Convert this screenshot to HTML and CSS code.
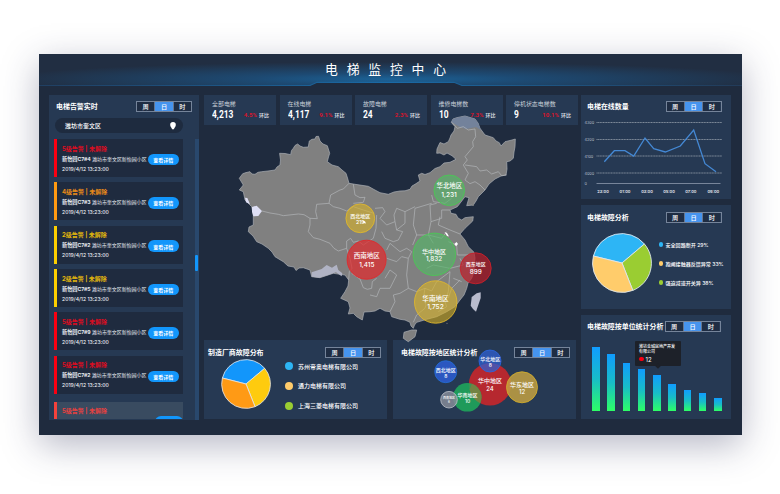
FILE: index.html
```html
<!DOCTYPE html>
<html lang="zh-CN">
<head>
<meta charset="utf-8">
<title>电梯监控中心</title>
<link rel="stylesheet" href="styles.css">
</head>
<body>
<main class="dashboard">
  <header class="header">
    <svg class="header-line" viewBox="39 54 703 34"><path class="header-fill" d="M39 54H742V85.5H462L454 82.3H317L310 85.5H39Z"/><path d="M39 85.5H310L317 82.3H454L462 85.5H742" fill="none" stroke="url(#edge)" stroke-width="1.2"/>
      <defs>
        <linearGradient id="edge"><stop offset="0" stop-color="#203f62"/><stop offset=".5" stop-color="#1a6aa5"/><stop offset="1" stop-color="#223b59"/></linearGradient>
        <radialGradient id="glow" cx=".5" cy=".8" r=".55"><stop offset="0" stop-color="#1b6297"/><stop offset=".35" stop-color="#1d4a73"/><stop offset="1" stop-color="#212e42"/></radialGradient>
      </defs>
    </svg>
    <h1>电梯监控中心</h1>
  </header>

  <div class="columns">
    <section class="panel alerts">
      <div class="head"><h2>电梯告警实时</h2><div class="tabs"><span>周</span><span class="on">日</span><span>时</span></div></div>
      <div class="search"><span>潍坊市奎文区</span><svg viewBox="0 0 6 8"><path d="M3 0a2.8 2.8 0 0 1 2.8 2.9C5.8 4.600 4.200 5.500 3.900 7.300H2.100C1.800 5.500 .2 4.600 .2 2.900A2.800 2.800 0 0 1 3 0Z" fill="#fff"/></svg></div>
      <div class="scroller">
        <div class="list">
          <article class="alert l5"><h3>5级告警 | 未解除</h3><p><b>新怡园C7#4</b> 潍坊市奎文区新怡园小区</p><time>2019/4/12 13:23:00</time><button>查看详情</button></article>
          <article class="alert l4"><h3>4级告警 | 未解除</h3><p><b>新怡园C7#3</b> 潍坊市奎文区新怡园小区</p><time>2019/4/12 13:23:00</time><button>查看详情</button></article>
          <article class="alert l2"><h3>2级告警 | 未解除</h3><p><b>新怡园C7#2</b> 潍坊市奎文区新怡园小区</p><time>2019/4/12 13:23:00</time><button>查看详情</button></article>
          <article class="alert l2"><h3>2级告警 | 未解除</h3><p><b>新怡园C7#5</b> 潍坊市奎文区新怡园小区</p><time>2019/4/12 13:23:00</time><button>查看详情</button></article>
          <article class="alert l5"><h3>5级告警 | 未解除</h3><p><b>新怡园C7#9</b> 潍坊市奎文区新怡园小区</p><time>2019/4/12 13:23:00</time><button>查看详情</button></article>
          <article class="alert l5"><h3>5级告警 | 未解除</h3><p><b>新怡园C7#2</b> 潍坊市奎文区新怡园小区</p><time>2019/4/12 13:23:00</time><button>查看详情</button></article>
          <article class="alert l5 entering"><h3>5级告警 | 未解除</h3><button></button></article>
        </div>
        <div class="track"><i></i></div>
      </div>
    </section>

    <div class="center">
      <div class="stats">
        <div class="stat"><h4>全部电梯</h4><div><strong>4,213</strong><em>4.5%</em><small>环比</small></div></div>
        <div class="stat"><h4>在线电梯</h4><div><strong>4,117</strong><em>9.1%</em><small>环比</small></div></div>
        <div class="stat"><h4>故障电梯</h4><div><strong>24</strong><em>2.3%</em><small>环比</small></div></div>
        <div class="stat"><h4>维修电梯数</h4><div><strong>10</strong><em>7.3%</em><small>环比</small></div></div>
        <div class="stat"><h4>停机状态电梯数</h4><div><strong>9</strong><em>10.1%</em><small>环比</small></div></div>
      </div>
      <svg class="map" viewBox="204 125 374 215">
        <g fill="#808080" stroke="#a9adb3" stroke-width=".7" stroke-linejoin="round">
          <path d="M239.300 178.300L242.700 173.700 246 172.600 250 171.700 252 174 255 174.300 258 172.300 261.700 171.700 268 171 275 170 277 167 280 165 280.500 160 279.600 153.300 285 153.500 290.700 154.700 291.500 150.500 293.300 148.300 295 145.500 297.700 144 300 146 303.300 147.300 308.300 147 309.300 141 312 139.300 315 139 316 136.500 318.500 136.300 320 141 323 144 327.300 145.700 329.700 153.300 328.500 157 327.300 161.700 332 165 338.300 166.700 342 170 346 173.300 347.500 178 349 183.300 355 184.300 368.300 186.300 374 189.500 380 192.700 388.300 194.300 394 192 400 191 405 190.800 410 189.300 412 186 415 184.300 420 181 418.300 175 421.700 173.300 425 174.500 430 172.700 435 168.500 440 166.700 444 163 450 162.300 456 159.300 452 155.700 447 153 444 155 440 153 436.700 153.300 437 149 440 142.500 444 144 448.300 141.700 450 138 451 135 454 131 455 126.700 451.300 122.300 453 119 456.700 117.700 465 116 475 119 478 123 480 128.300 485 135 493.300 137.700 496 141 499.300 142.700 501 146 505 141.700 512 140 515.300 139 515 146.700 514 152 513.300 158.300 510 161 506.700 161.700 507 169 506 175 501 176 495 179 489 184 485 190 478.300 196.700 476 201 473.300 205 466.700 205.700 469 197.700 465 196.700 461 202 457.300 206.700 450 210 451 213.300 456 214.300 458 218 461.700 220 465 217.700 473.300 216.700 472.700 221 465 228.300 460 234 465 240 468.300 246.700 474 252.300 475 258 474.300 265 474 272 471.700 278.300 468 283 466.700 288.300 464 295 460 300 455 306.700 446.700 311.700 436.700 316.700 426.700 319.300 416.700 322.300 414.500 325 413.300 328.300 411 326 410 322.300 405 320 400 319.300 391.700 316.700 390 311.700 385 311 380 308.300 375 311 370 311.700 364 312 362.300 320 356.700 316.700 353.300 313.300 348.300 314 350 308 348.300 301.700 340.700 298.300 345 291.700 348 286 348.700 280 345 275 333.300 273.300 320 277.700 311.700 276.700 310 270 303.300 267.700 299 268 296 270.500 294 267 288 266 283.300 261.700 275 256.700 272 252 268.300 248.300 262 244 256.700 241.700 253 236 248.300 231.700 249 227 253.300 225 253.300 215 251.700 206.700 245 200 243.300 191.700 239.300 190 243.300 185Z"/>
          <path d="M416.700 330L415 336.700 408.300 341.700 403.300 338.300 404 332.300 411.700 330Z"/>
        </g>
        <path fill="#73829b" d="M451.300 122.300L453 119 456.700 117.700 465 116 475 119 478 123 481 130 476 127 466 129 460 127Z"/>
        <g transform="translate(230 115) scale(.3333)">
          <path fill="#dedff5" d="M45 248L52 249 60 268 48 262ZM66 276L80 272 96 288 85 303 70 304 66 290Z"/>
          <path fill="#b0b3c4" d="M245 485L245 472 275 462 290 450 306 458 320 449 325 465 337 475 335 484 318 472 295 480 268 488Z"/>
          <g class="borders">
            <path d="M96 288L120 294 145 298 160 302 205 297 222 299 240 310 262 311 257 290 260 268 297 265L302 240 330 225 340 222 357 205M370 208L375 240 390 248 405 247 400 262 370 265M297 265L310 275 330 280 350 288 370 275 400 285 432 295M240 310L240 330 235 350 250 368 270 373 300 385 312 400 325 408 350 400 350 378 362 370 370 382 385 378 400 390M356 495L358 470 366 460 360 430 350 400M365 475L390 492 400 518 412 523 425 520 427 500 440 490M440 300L438 340 430 370 415 380 400 390"/>
          </g>
        </g>
        <g class="borders" transform="translate(370 115) scale(.3333)">
          <path d="M246 22L262 40 280 35 295 45 315 42 317 65 308 80 310 95 285 125 292 135 280 150 295 175 285 195 300 206 315 200 330 210 345 225M285 150L320 155 330 168 350 165 365 177 385 170 395 182 410 180M185 240L190 260 225 265 245 250M200 265L180 270 183 320 175 360M185 265L135 280 130 330 140 360 128 390M15 280L38 278 45 290 30 310 50 330 75 320 72 300 80 280 105 290 135 275M75 320L80 345 98 350 85 375 70 380 45 370 35 350M105 290L105 325 80 345M183 320L215 310 215 285 240 285M210 305L205 330 240 345 270 357M50 430L80 440 95 425 115 430 125 410 110 400 90 410 60 385 50 405M115 430L110 480 115 520 90 535 70 540 75 560 60 590M115 520L140 530 165 520 185 528 200 500 240 470M165 520L160 550 168 570 165 580 140 600 130 622M240 470L235 530 225 560 230 575 205 590M270 430L280 450 240 460 190 450 170 460M235 380L260 390 262 420 300 420M250 490L275 500M175 360L215 370 230 350M140 360L175 360 190 385M0 540L20 545 30 520 60 520 80 480 60 465 45 490M270 495L245 520 235 550"/>
        </g>
        <g fill="#fff"><path d="M444.500 232L447 233 449 236.500 447 236ZM454.300 244L456.500 242 458 244 456 246.300Z"/></g>
        <path fill="#b9bccd" d="M480.700 292.300L480.700 298 476 311.700 473 309 470.700 305.700 471.700 297 476.700 293.300Z"/>
        <g fill="#808080"><circle cx="447" cy="323.300" r=".6"/><circle cx="473" cy="205" r="1"/></g>
        <g class="bubbles">
          <circle class="green" cx="449.300" cy="190.300" r="15.300"/>
          <circle class="green" cx="434.300" cy="254.300" r="21.200"/>
          <circle class="gold" cx="435.700" cy="302" r="21.200"/>
          <circle class="crimson" cx="475.700" cy="268.300" r="15.500"/>
          <circle class="gold" cx="360.300" cy="218.300" r="14.400"/>
          <circle class="red" cx="366.600" cy="259.700" r="19.500"/>
        </g>
        <path fill="#fff" d="M362.500 221L365 221.300 366 223.500 363.500 223Z"/>
        <g class="labels">
          <text x="449.300" y="186.300" font-size="6.400">华北地区</text><text x="449" y="195" font-size="6.600">1,231</text>
          <text x="434" y="251.200" font-size="6">华中地区</text><text x="434" y="258.700" font-size="6.300">1,832</text>
          <text x="435.500" y="298.700" font-size="6.600">华南地区</text><text x="435.500" y="306.500" font-size="6.600">1,752</text>
          <text x="475.800" y="264.200" font-size="5">西东地区</text><text x="475.800" y="271.700" font-size="6.400">899</text>
          <text x="360.300" y="215.500" font-size="5">西北地区</text><text x="360.300" y="221.800" font-size="5.200">219</text>
          <text x="366.800" y="255.600" font-size="6.500">西南地区</text><text x="366.800" y="264.500" font-size="6.400">1,415</text>
        </g>
      </svg>
      <div class="bottom">
        <section class="panel">
          <div class="head"><h2>制造厂商故障分布</h2><div class="tabs"><span>周</span><span class="on">日</span><span>时</span></div></div>
          <div class="maker">
            <svg class="pie-small" viewBox="-25 -25 50 50"><g stroke="#e6e9ee" stroke-width=".8"><path fill="#1296fb" d="M0 0L-23.600 -6A24.400 24.400 0 0 1 18.700 -15.700Z"/><path fill="#fecb0e" d="M0 0L18.700 -15.700A24.400 24.400 0 0 1 9 22.700Z"/><path fill="#ff9a15" d="M0 0L9 22.700A24.400 24.400 0 0 1 -23.600 -6Z"/></g></svg>
            <ul><li class="c-blue">苏州帝奥电梯有限公司</li><li class="c-orange">通力电梯有限公司</li><li class="c-green">上海三菱电梯有限公司</li></ul>
          </div>
        </section>
        <section class="panel region">
          <div class="head"><h2>电梯故障按地区统计分析</h2><div class="tabs"><span>周</span><span class="on">日</span><span>时</span></div></div>
          <svg class="region-chart" viewBox="393 340 183 79">
            <circle cx="490" cy="384.300" r="21.200" fill="#b6282f"/>
            <circle cx="490" cy="361" r="11" fill="#2f5fd0" fill-opacity=".75" stroke="#2b66e0" stroke-width=".8"/>
            <circle cx="445.700" cy="371.700" r="11" fill="#2b57c0" stroke="#226fd8" stroke-width=".8"/>
            <circle cx="467.300" cy="397.300" r="14.300" fill="#1eaf5c" fill-opacity=".83"/>
            <path d="M469.500 389.500A21.200 21.200 0 0 0 480 403.200 14.300 14.300 0 0 0 472 383.800Z" fill="#8b7a3c" opacity=".7"/>
            <circle cx="522" cy="387.300" r="15.500" fill="#c6a341" fill-opacity=".83" stroke="#ceaa2b" stroke-width=".9"/>
            <circle cx="449" cy="399.700" r="8.300" fill="#858b98" fill-opacity=".85" stroke="#bec3cb" stroke-width=".8"/>
            <g class="labels">
              <text x="490" y="380.900" font-size="6">华中地区</text><text x="490" y="388" font-size="6">24</text>
              <text x="490.300" y="359.200" font-size="5">华北地区</text><text x="490.300" y="365.200" font-size="5">8</text>
              <text x="445.800" y="369.900" font-size="5">西北地区</text><text x="445.800" y="375.700" font-size="5">8</text>
              <text x="467.600" y="394.700" font-size="5">华南地区</text><text x="467.600" y="400.700" font-size="5">10</text>
              <text x="522" y="384.200" font-size="6">华东地区</text><text x="522" y="391.700" font-size="6">12</text>
              <text x="449" y="398" font-size="3">西南地区</text><text x="449" y="401.600" font-size="3">6</text>
            </g>
          </svg>
        </section>
      </div>
    </div>

    <div class="right">
      <section class="panel">
        <div class="head"><h2>电梯在线数量</h2><div class="tabs"><span>周</span><span class="on">日</span><span>时</span></div></div>
        <svg class="line-chart" viewBox="581 118 150 81">
          <path d="M596.500 122.500H722M596.500 139.500H722M596.500 156H722M596.500 173H722" stroke="#7d8998" stroke-width="1" stroke-dasharray="1.200 .4"/>
          <path d="M596.500 183.500H720.500" stroke="#77859a" stroke-width="1"/>
          <path d="M604.300 161.700L614.300 150.700H625L633.700 156 645 138 653.700 148.700 665.300 152 680.300 146 693.700 130 705 163.700 716 171.700" fill="none" stroke="#4488d4" stroke-width="1.300"/>
          <g class="ylab"><text x="584.500" y="122.500">4300</text><text x="584.500" y="139.500">4200</text><text x="584.500" y="156">4100</text><text x="584.500" y="173">4000</text><text x="584.500" y="183.500">0</text></g>
          <g class="xlab"><text x="603" y="191.200">23:00</text><text x="625" y="191.800">01:00</text><text x="647" y="191.800">03:00</text><text x="669" y="191.800">05:00</text><text x="690.800" y="191.800">07:00</text><text x="713.300" y="191.800">09:00</text></g>
        </svg>
      </section>
      <section class="panel">
        <div class="head"><h2>电梯故障分析</h2><div class="tabs"><span>周</span><span class="on">日</span><span>时</span></div></div>
        <div class="faults">
          <svg class="pie-large" viewBox="-30 -30 60 60"><g stroke="#dfe7ee" stroke-width=".9"><path fill="#2db5f5" d="M0 0L-28.600 -7A29.400 29.400 0 0 1 22.400 -19Z"/><path fill="#9acd32" d="M0 0L22.400 -19A29.400 29.400 0 0 1 10.800 27.400Z"/><path fill="#ffcc6b" d="M0 0L10.800 27.400A29.400 29.400 0 0 1 -28.600 -7Z"/></g></svg>
          <ul><li class="c-blue">安全回路断开 29%</li><li class="c-orange">抱闸接触器反馈异常 33%</li><li class="c-green">强迫减速开关异 38%</li></ul>
        </div>
      </section>
      <section class="panel units">
        <div class="head"><h2>电梯故障按单位统计分析</h2><div class="tabs"><span>周</span><span class="on">日</span><span>时</span></div></div>
        <div class="bars">
          <i style="height:64.500px"></i><i style="height:57.500px"></i><i style="height:48.500px"></i><i style="height:42.500px"></i><i style="height:36.500px"></i><i style="height:27.500px"></i><i style="height:21.500px"></i><i style="height:18px"></i><i style="height:13.500px"></i>
        </div>
        <div class="tooltip"><p>潍坊金城房地产开发<br>有限公司</p><div>12</div></div>
      </section>
    </div>
  </div>
</main>
</body>
</html>
```

FILE: styles.css
```css
* { box-sizing: border-box; margin: 0; padding: 0; }
html { -webkit-text-size-adjust: none; }
body {
  width: 780px; height: 494px; padding: 54px 38px 0 39px; overflow: hidden;
  background: #fff; color: #fff;
  font-family: Inter, "Noto Sans CJK SC", sans-serif;
}
svg { display: block; }
ul { list-style: none; }
.dashboard { width: 703px; height: 381px; background: #1f2b3e; box-shadow: 0 10px 34px rgba(40, 45, 85, .34); }

.header { position: relative; height: 41px; }
.header-line { width: 703px; height: 34px; }
.header-fill { fill: url(#glow); }
.header h1 {
  position: absolute; left: 286px; top: 6px; line-height: 19px; white-space: nowrap;
  font-size: 12.8px; font-weight: 400; letter-spacing: 8.85px;
}

.columns { display: grid; grid-template-columns: 150px 376px 150px; column-gap: 3px; padding-left: 10px; height: 325px; }
.center { margin-left: 2px; width: 374px; }
.panel { background: #263953; }
.head { display: flex; align-items: center; justify-content: space-between; height: 23px; padding: 0 9.500px 0 6px; }
.head h2 { font-size: 6.95px; font-weight: 700; white-space: nowrap; line-height: 11px; }
.tabs { display: flex; flex: none; width: 56px; height: 11px; border: 1px solid #75849a; font-size: 6.2px; font-weight: 500; line-height: 9px; text-align: center; }
.tabs span { flex: 1; background: #1f2d43; }
.tabs span + span { border-left: 1px solid #66768e; }
.tabs .on { background: #4694ee; }

.alerts { height: 325px; overflow: hidden; }
.alerts .head { padding: 0 7px; }
.search {
  display: flex; align-items: center; justify-content: space-between;
  width: 128px; height: 15px; margin-left: 6px; padding: 0 7px 0 10px;
  background: #1e2b3f; border-radius: 8px; font-size: 6px; font-weight: 500;
}
.search svg { width: 6px; height: 8px; }
.scroller { display: flex; justify-content: space-between; height: 281px; margin-top: 6px; padding-left: 5px; }
.list { display: flex; flex-direction: column; gap: 5.35px; width: 129px; }
.alert { position: relative; flex: none; height: 38px; padding: 3.500px 0 0 5px; border-left: 3px solid; background: #1f2b3f; }
.alert h3 { font-size: 6px; line-height: 11px; font-weight: 700; }
.alert p, .alert time { display: block; color: #e8ecf2; font-size: 4.97px; line-height: 11px; white-space: nowrap; }
.alert p b { font-size: 5.15px; font-weight: 700; }
.alert time { font-size: 5.1px; line-height: 8px; font-weight: 500; }
.alert button {
  position: absolute; right: 4.300px; top: 14.800px; width: 31px; height: 11.600px;
  border: 0; border-radius: 6px; background: #1296fb; color: #fff;
  font: 700 5px/11px "Noto Sans CJK SC", sans-serif;
}
.l5 { border-color: #fb0012; } .l5 h3 { color: #df0c20; }
.l4 { border-color: #ff9a12; } .l4 h3 { color: #ec8b18; }
.l2 { border-color: #fccf00; } .l2 h3 { color: #e3b70c; }
.entering { margin-top: 2.500px; height: 17px; overflow: hidden; background: #394b60; border-color: #f4423c; }
.entering h3 { color: #e8413f; }
.entering button { right: 0; width: 28px; }
.track { width: 4px; background: #29486d; padding-top: 116px; }
.track i { display: block; width: 3px; height: 16px; border-radius: 1px; background: #1296fb; }

.stats { display: flex; gap: 3.500px; }
.stat { width: 72px; height: 30px; padding: 3px 7px 0 8px; background: #263953; }
.stat h4 { color: #c9d0d9; font-size: 5.95px; line-height: 11px; font-weight: 400; white-space: nowrap; }
.stat div { display: flex; align-items: center; height: 12px; }
.stat strong { width: 20px; margin-right: auto; font: 700 10.8px/12px Roboto, sans-serif; transform: scaleX(.78); transform-origin: 0 50%; }
.stat em { color: #d8142b; font: 700 6.1px/12px Roboto, sans-serif; margin-right: 2px; }
.stat small { color: #d0d6df; font-size: 5px; font-weight: 700; line-height: 12px; }

.map { position: relative; z-index: 1; width: 374px; height: 215px; overflow: visible; }
.borders { fill: none; stroke: #b4b6b9; stroke-width: 2.400; stroke-linejoin: round; opacity: .85; }
.bubbles circle { fill-opacity: .62; stroke-width: .9; }
.green { fill: #53b765; stroke: #49c854; }
.gold { fill: #d6b229; stroke: #dfb72c; }
.red { fill: #e3282b; stroke: #e1292d; }
.bubbles .red { fill-opacity: .7; }
.crimson { fill: #b81f29; stroke: #c9202b; }
.bubbles .crimson { fill-opacity: .72; }
.labels text { fill: #fff; text-anchor: middle; dominant-baseline: central; font-weight: 500; }

.bottom { display: flex; gap: 6px; }
.bottom .panel { position: relative; width: 183px; height: 79px; }
.bottom .head { padding: 0 6px 0 4px; height: 24px; }
.bottom .region .head { padding-left: 8px; }
.maker { display: flex; padding-left: 17px; margin-top: -5px; }
.pie-small { width: 50px; height: 50px; }
.maker ul { margin: 2px 0 0 14px; }
.maker li { display: flex; align-items: center; height: 10px; margin-bottom: 9.500px; gap: 5px; font-size: 6px; font-weight: 500; white-space: nowrap; }
.maker li:last-child { padding-top: 1px; }
li::before { content: ""; width: 8px; height: 8px; border-radius: 50%; background: currentColor; }
.c-blue::before { background: #2db5f5; }
.c-orange::before { background: #ffcc6b; }
.c-green::before { background: #9acd32; }
.region-chart { position: absolute; inset: 0; width: 183px; height: 79px; }

.right { display: flex; flex-direction: column; gap: 6px; }
.right .panel { height: 104px; }
.line-chart { width: 150px; height: 81px; }
.ylab text { fill: #b3bdc9; font-size: 3.8px; dominant-baseline: central; }
.xlab text { fill: #e3e8ef; font-size: 4px; font-weight: 600; text-anchor: middle; dominant-baseline: central; }
.right .panel + .panel .head { height: 25.500px; }
.faults { display: flex; padding-left: 11px; margin-top: 2px; }
.pie-large { width: 60px; height: 60px; }
.faults ul { margin: 6.500px 0 0 6.500px; }
.faults li { display: flex; align-items: center; height: 11px; margin-bottom: 8px; gap: 2.500px; font-size: 5.05px; font-weight: 500; white-space: nowrap; }
.faults li::before { width: 4.500px; height: 4.500px; }

.units { position: relative; }
.right .panel + .units .head { height: 23px; padding-right: 10.500px; }
.bars { display: flex; align-items: flex-end; gap: 7.750px; height: 73.400px; padding: 0 9px 0 11px; }
.bars i { flex: none; width: 7.500px; background: linear-gradient(#109cff, #18bdc8 50%, #2dff66); }
.tooltip { position: absolute; left: 54px; top: 25.500px; width: 46px; height: 25.500px; padding: 3px 4px 0; border-radius: 1px; background: #1d2129; }
.tooltip::after { content: ""; position: absolute; left: 21px; bottom: -1.500px; width: 4px; height: 4px; background: #1d2129; transform: rotate(45deg); }
.tooltip p { font-size: 4px; line-height: 5.600px; font-weight: 500; white-space: nowrap; }
.tooltip div { display: flex; align-items: center; gap: 2px; height: 9px; font-size: 6px; }
.tooltip div::before { content: ""; width: 4.500px; height: 4.500px; border-radius: 50%; background: #fb0012; }
```
